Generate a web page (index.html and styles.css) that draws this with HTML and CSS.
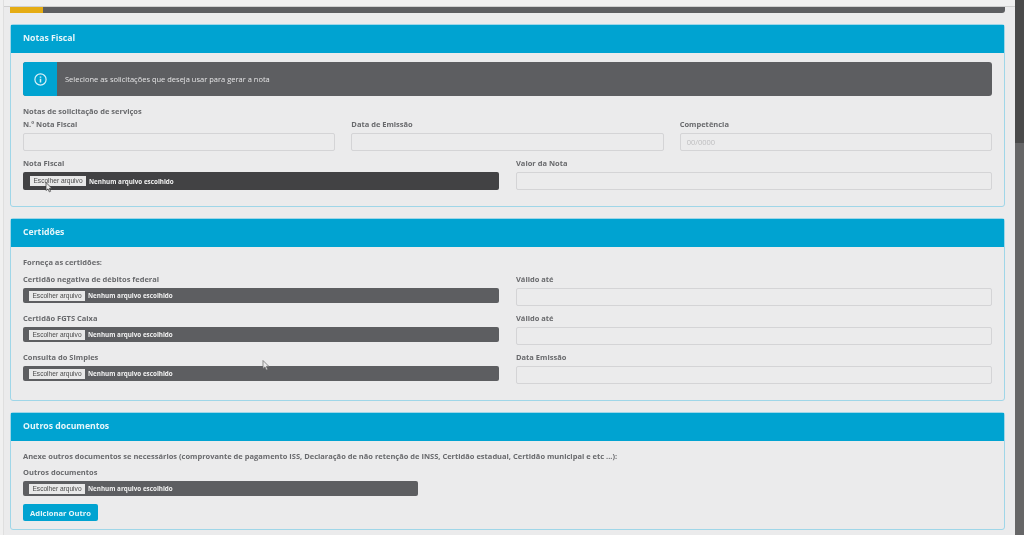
FILE: index.html
```html
<!DOCTYPE html>
<html lang="pt-BR">
<head>
	<meta charset="UTF-8">
	<title>Notas Fiscal</title>
	<link rel="stylesheet" href="styles.css">
</head>
<body>

<div class="rail"></div>

<div class="content">
	<div class="topline"></div>

	<div class="progress">
		<div class="progress-fill"></div>
	</div>

	<section class="card">
		<h2 class="card-title">Notas Fiscal</h2>
		<div class="card-body">
			<div class="alert">
				<div class="alert-icon">
					<svg width="13" height="13" viewBox="0 0 13 13" fill="none" stroke="#d9f1f8">
						<circle cx="6.5" cy="6.5" r="5.6" stroke-width="1.2"/>
						<path d="M6.5 5.8v3.6" stroke-width="1.5"/>
						<path d="M6.5 3.4v1.4" stroke-width="1.5"/>
					</svg>
				</div>
				<div class="alert-text">Selecione as solicitações que deseja usar para gerar a nota</div>
			</div>

			<p class="note note-first">Notas de solicitação de serviços</p>

			<div class="row row-3">
				<div class="field">
					<label class="field-label">N.º Nota Fiscal</label>
					<input class="input" type="text">
				</div>
				<div class="field">
					<label class="field-label">Data de Emissão</label>
					<input class="input" type="text">
				</div>
				<div class="field">
					<label class="field-label">Competência</label>
					<input class="input" type="text" placeholder="00/0000">
				</div>
			</div>

			<div class="row row-2">
				<div class="field">
					<label class="field-label">Nota Fiscal</label>
					<div class="file file-active">
						<button class="file-btn" type="button">Escolher arquivo</button>
						<span class="file-name">Nenhum arquivo escolhido</span>
					</div>
				</div>
				<div class="field">
					<label class="field-label">Valor da Nota</label>
					<input class="input" type="text">
				</div>
			</div>
		</div>
	</section>

	<section class="card">
		<h2 class="card-title">Certidões</h2>
		<div class="card-body">
			<p class="note">Forneça as certidões:</p>

			<div class="row row-2">
				<div class="field">
					<label class="field-label">Certidão negativa de débitos federal</label>
					<div class="file">
						<button class="file-btn" type="button">Escolher arquivo</button>
						<span class="file-name">Nenhum arquivo escolhido</span>
					</div>
				</div>
				<div class="field">
					<label class="field-label">Válido até</label>
					<input class="input" type="text">
				</div>
			</div>

			<div class="row row-2">
				<div class="field">
					<label class="field-label">Certidão FGTS Caixa</label>
					<div class="file">
						<button class="file-btn" type="button">Escolher arquivo</button>
						<span class="file-name">Nenhum arquivo escolhido</span>
					</div>
				</div>
				<div class="field">
					<label class="field-label">Válido até</label>
					<input class="input" type="text">
				</div>
			</div>

			<div class="row row-2">
				<div class="field">
					<label class="field-label">Consulta do Simples</label>
					<div class="file">
						<button class="file-btn" type="button">Escolher arquivo</button>
						<span class="file-name">Nenhum arquivo escolhido</span>
					</div>
				</div>
				<div class="field">
					<label class="field-label">Data Emissão</label>
					<input class="input" type="text">
				</div>
			</div>
		</div>
	</section>

	<section class="card card-last">
		<h2 class="card-title">Outros documentos</h2>
		<div class="card-body">
			<p class="note note-tight">Anexe outros documentos se necessários (comprovante de pagamento ISS, Declaração de não retenção de INSS, Certidão estadual, Certidão municipal e etc ...):</p>

			<div class="field">
				<label class="field-label">Outros documentos</label>
				<div class="file file-short">
					<button class="file-btn" type="button">Escolher arquivo</button>
					<span class="file-name">Nenhum arquivo escolhido</span>
				</div>
			</div>

			<button class="btn-add" type="button">Adicionar Outro</button>
		</div>
	</section>
</div>

<div class="scrollbar">
	<div class="scrollbar-thumb"></div>
</div>

<!-- mouse pointers caught in the screenshot -->
<svg class="pointer pointer-dark" width="8" height="11" viewBox="0 0 8 11">
	<path d="M1 .5v8l2-1.6 1.3 3 1.3-.6-1.3-2.9h2.6z" fill="#e8e8e8" stroke="#333" stroke-width=".7"/>
</svg>
<svg class="pointer pointer-light" width="8" height="11" viewBox="0 0 8 11">
	<path d="M1 .5v8l2-1.6 1.3 3 1.3-.6-1.3-2.9h2.6z" fill="#ebebec" stroke="#666" stroke-width=".7"/>
</svg>

</body>
</html>
```

FILE: styles.css
```css
*{
	box-sizing: border-box;
	margin: 0;
}
html, body{
	height: 100%;
}
html{
	background-color: #ebebec;
}
/* the source is a video frame, everything in it is slightly soft */
body{
	position: relative;
	display: flex;
	overflow: hidden;
	background-color: #ebebec;
	color: #68696c;
	font-family: "Open Sans", "Liberation Sans", sans-serif;
	filter: blur(0.35px);
}

.rail{
	flex: none;
	width: 4px;
	background-color: #f0f0f0;
	border-right: 1px solid #dfdfdf;
}
.content{
	flex: 1;
	min-width: 0;
	padding-left: 6px;
	padding-right: 10px;
}
.topline{
	height: 7px;
	margin: 0 -10px 0 -6px;
	background-color: #f0f0f0;
	border-bottom: 1px solid #d0d0d0;
}

.progress{
	height: 6px;
	margin-bottom: 11px;
	background-color: #5d5e61;
	border-radius: 0 0 3px 3px;
}
.progress-fill{
	width: 33px;
	height: 100%;
	background-color: #e5ac13;
}

.card{
	margin-bottom: 11px;
	background-color: #ebebec;
	border: 1px solid #9fd6e8;
	border-radius: 3px;
}
.card-title{
	height: 28px;
	padding: 0 12px;
	background-color: #00a3d1;
	color: #e6f6fa;
	font-size: 8.7px;
	font-weight: 700;
	line-height: 27px;
}
.card-body{
	padding: 9px 12px 10px;
}
.card-last .card-body{
	padding-bottom: 8px;
}

.alert{
	display: flex;
	height: 34px;
	overflow: hidden;
	background-color: #5d5e61;
	border-radius: 3px;
}
.alert-icon{
	display: flex;
	flex: none;
	align-items: center;
	justify-content: center;
	width: 34px;
	background-color: #00a3d1;
}
.alert-text{
	padding-left: 8px;
	color: #e4e4e5;
	font-size: 7.5px;
	line-height: 34px;
}

.note{
	margin-bottom: 4px;
	font-size: 7.5px;
	font-weight: 700;
	line-height: 13px;
}
.note-first{
	margin-top: 9px;
	margin-bottom: 0;
}
.note-tight{
	margin-bottom: 3px;
}

.row{
	display: grid;
	margin-bottom: 6px;
}
.row-2{
	grid-template-columns: 1fr 1fr;
	column-gap: 17px;
}
.row-3{
	grid-template-columns: 1fr 1fr 1fr;
	column-gap: 16px;
}

.field{
	display: flex;
	flex-direction: column;
	align-items: stretch;
}
.field-label{
	margin-bottom: 2px;
	font-size: 7.5px;
	font-weight: 700;
	line-height: 13px;
}

.input{
	height: 18px;
	padding: 0 6px;
	background-color: #ebebec;
	border: 1px solid #d4d4d6;
	border-radius: 2px;
	font-family: inherit;
	font-size: 7.5px;
}
.input::placeholder{
	color: #bdbdbf;
}

.file{
	display: flex;
	align-items: center;
	height: 15px;
	padding-left: 6px;
	background-color: #5d5e61;
	border-radius: 2px;
}
.file-active{
	height: 18px;
	padding-left: 7px;
	background-color: #424244;
}
.file-short{
	width: 395px;
}
.file-btn{
	flex: none;
	width: 56px;
	height: 10px;
	padding: 0;
	background-color: #e9e9e9;
	border: 0;
	color: #4a4a4a;
	font-family: "Liberation Sans", sans-serif;
	font-size: 6.6px;
	line-height: 10px;
}
.file-name{
	margin-left: 3px;
	color: #f2f2f2;
	font-size: 6.3px;
	font-weight: 700;
}

.btn-add{
	display: block;
	width: 75px;
	height: 17px;
	margin-top: 8px;
	padding: 0;
	background-color: #00a3d1;
	border: 0;
	border-radius: 2px;
	color: #e6f6fa;
	font-family: inherit;
	font-size: 7.6px;
	font-weight: 700;
}

.scrollbar{
	flex: none;
	width: 9px;
	padding-top: 143px;
	background-color: #4a4a4a;
}
.scrollbar-thumb{
	height: 100%;
	background-color: #666667;
}

.pointer{
	position: absolute;
}
.pointer-dark{
	left: 45px;
	top: 182px;
}
.pointer-light{
	left: 262px;
	top: 360px;
}
```
